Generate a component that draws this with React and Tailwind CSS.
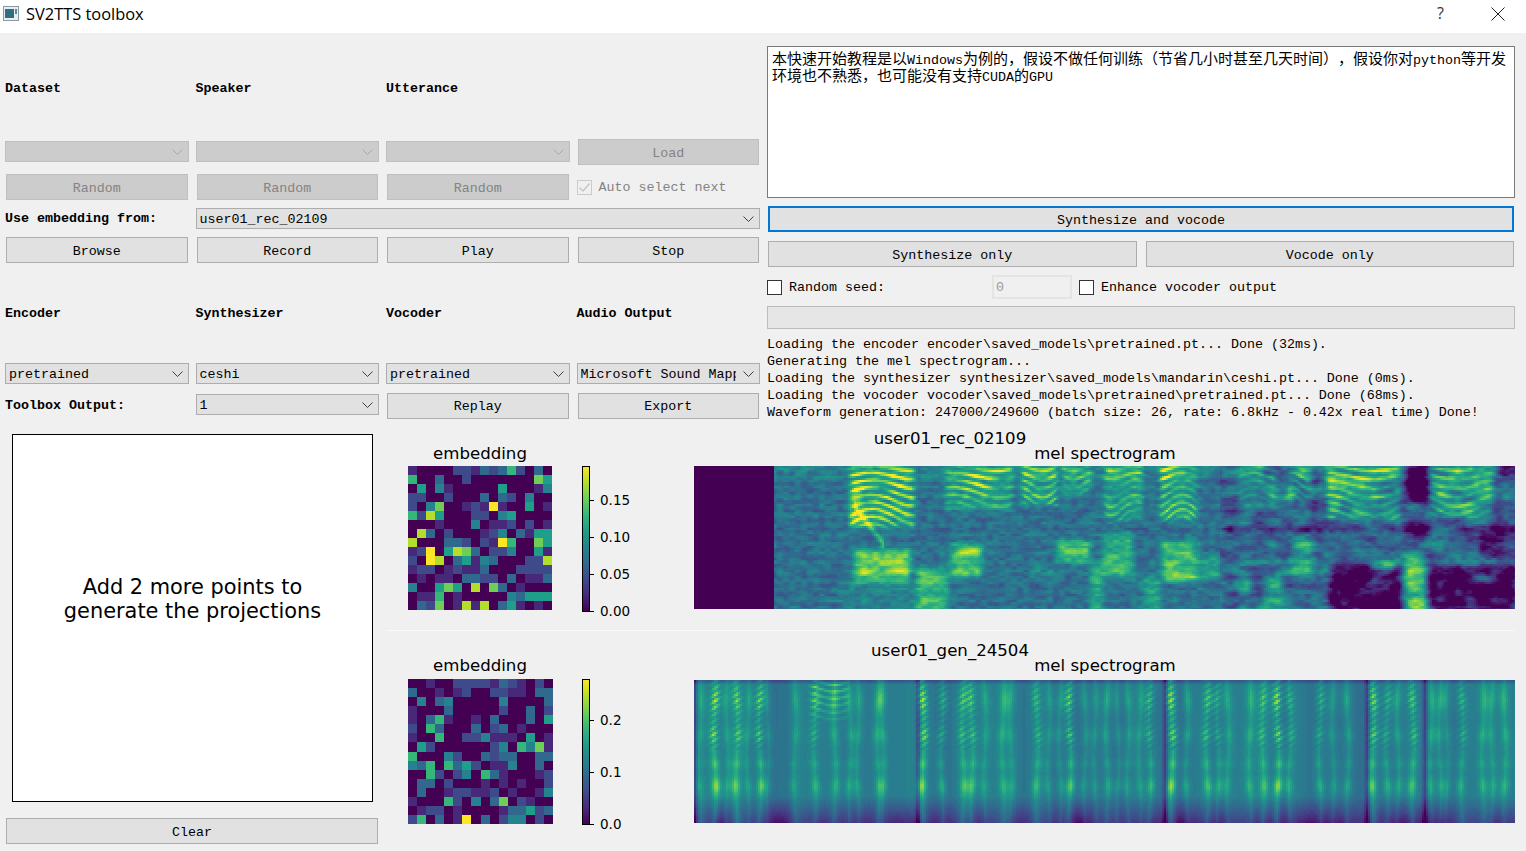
import React from 'react';

// ─── Viridis ─────────────────────────────────────────────────
const VIRIDIS = [
  [68, 1, 84], [72, 40, 120], [62, 74, 137], [49, 104, 142], [38, 130, 142],
  [31, 158, 137], [53, 183, 121], [110, 206, 88], [181, 222, 43], [253, 231, 37],
];

function viridis(t) {
  const v = Math.min(0.9999, Math.max(0, t)) * (VIRIDIS.length - 1);
  const i = Math.floor(v);
  const f = v - i;
  const a = VIRIDIS[i];
  const b = VIRIDIS[i + 1];
  return `rgb(${Math.round(a[0] + (b[0] - a[0]) * f)},${Math.round(a[1] + (b[1] - a[1]) * f)},${Math.round(a[2] + (b[2] - a[2]) * f)})`;
}

// ─── Noise helpers for the spectrograms ──────────────────────
const rnd = (x, y) => {
  const s = Math.sin(x * 127.1 + y * 311.7) * 43758.5453;
  return s - Math.floor(s);
};
const smooth = (t) => t * t * (3 - 2 * t);
const noise = (x, y) => {
  const xi = Math.floor(x);
  const yi = Math.floor(y);
  const u = smooth(x - xi);
  const v = smooth(y - yi);
  const a = rnd(xi, yi) * (1 - u) + rnd(xi + 1, yi) * u;
  const b = rnd(xi, yi + 1) * (1 - u) + rnd(xi + 1, yi + 1) * u;
  return a * (1 - v) + b * v;
};
const edge = (v, a, b, s) => {
  const l = Math.min(1, Math.max(0, (v - a) / s + 0.5));
  const r = Math.min(1, Math.max(0, (b - v) / s + 0.5));
  return smooth(l) * smooth(r);
};
const box = (x, y, b, s = 5) => edge(x, b[0], b[1], s) * edge(y, b[2], b[3], s);

// x0, x1, y0, y1, amplitude
const REC_VOICED = [
  [850, 915, 1, 62, 0.5], [945, 1013, 1, 44, 0.44], [1022, 1057, 1, 40, 0.44], [1062, 1092, 1, 30, 0.36],
  [1105, 1143, 1, 55, 0.34], [1160, 1197, 1, 55, 0.46], [1238, 1277, 1, 35, 0.24], [1287, 1313, 1, 35, 0.2],
  [1327, 1400, 1, 55, 0.42], [1430, 1493, 1, 50, 0.3],
];
const REC_BLOBS = [
  [853, 912, 82, 116, 0.32], [860, 910, 90, 96, 0.14], [856, 905, 102, 108, 0.18], [950, 982, 78, 112, 0.32],
  [958, 982, 84, 90, 0.2], [952, 982, 102, 108, 0.14], [1057, 1090, 74, 96, 0.34], [1030, 1057, 100, 115, 0.1],
  [917, 947, 102, 146, 0.3], [920, 945, 108, 118, 0.12], [1090, 1103, 98, 146, 0.26], [1103, 1133, 67, 113, 0.26],
  [1105, 1128, 100, 106, 0.14], [1162, 1197, 75, 115, 0.34], [1197, 1220, 90, 113, 0.18], [1165, 1220, 108, 113, 0.14],
  [1143, 1160, 110, 146, 0.2], [1238, 1250, 105, 146, 0.16], [1263, 1285, 108, 146, 0.18], [1290, 1313, 70, 115, 0.18],
  [1330, 1400, 100, 150, -0.42], [1310, 1330, 35, 50, -0.2], [1407, 1427, -5, 37, -0.4], [1405, 1430, 58, 75, -0.3],
  [1430, 1515, 100, 150, -0.38], [1480, 1520, 60, 90, -0.26], [1500, 1520, -5, 12, -0.4], [1265, 1280, -5, 20, -0.3],
  [1370, 1395, 97, 105, 0.5], [1370, 1395, 110, 115, 0.4], [1405, 1427, 88, 146, 0.32], [1473, 1500, 110, 116, 0.36],
  [1220, 1520, 58, 66, -0.16], [840, 917, 115, 146, 0.06],
  [850, 862, 20, 58, 0.22], [1327, 1380, 12, 20, 0.16],
];

function recValue(x, y) {
  if (x < 775) return 0;
  let v = 0.37 + 0.2 * (noise(x / 6, y / 3) - 0.5) + 0.05 * (noise(x / 2.7, y / 1.6) - 0.5);
  v += 0.025 * Math.sin(y / 1.5) + (y < 12 ? 0.06 : 0);
  if (x > 1220) v += 0.32 * (noise(x / 14 + 9, y / 8) - 0.58);
  REC_VOICED.forEach((s, i) => {
    const b = box(x, y, s, 9);
    if (b > 0) {
      // harmonics sag through the middle of each voiced run
      const t = (x - s[0]) / (s[1] - s[0]);
      const bend = 6 * Math.sin(t * Math.PI * 1.5 + i) * (0.4 + y / 60);
      const wave = 0.5 + 0.5 * Math.sin((2 * Math.PI * (y + bend)) / 8);
      const mod = 0.15 + 1.4 * noise(x / 20 + i * 5, y / 11);
      const fall = 1 - (0.55 * y) / s[3];
      v += s[4] * b * Math.pow(wave, 1.5) * mod * fall + 0.13 * b;
    }
  });
  for (const s of REC_BLOBS) v += s[4] * box(x, y, s, 12) * (0.72 + 0.5 * noise(x / 18, y / 7));
  // the falling formant in the first vowel
  const d = Math.abs(y - (38 + (x - 853) * 1.3));
  if (x > 853 && x < 885 && d < 7) v += 0.3 * (1 - d / 7);
  return v;
}

// centre x, amplitude
const GEN_STREAKS = [
  [700, 0.14], [715, 0.42], [727, 0.14], [737, 0.32], [748, 0.16], [760, 0.36], [768, 0.12], [795, 0.14],
  [815, 0.22], [835, 0.2], [850, 0.18], [858, 0.16], [878, 0.2], [883, 0.18],
  [923, 0.44], [942, 0.24], [963, 0.28], [972, 0.28], [985, 0.14], [1003, 0.2], [1011, 0.14], [1037, 0.24],
  [1049, 0.14], [1060, 0.16], [1070, 0.36], [1085, 0.14], [1095, 0.14], [1107, 0.2], [1118, 0.14], [1128, 0.16],
  [1140, 0.14], [1150, 0.26], [1172, 0.44], [1187, 0.2], [1207, 0.3], [1218, 0.22], [1228, 0.16], [1250, 0.2],
  [1263, 0.26], [1278, 0.46], [1290, 0.22], [1320, 0.22], [1333, 0.14], [1348, 0.18], [1373, 0.38], [1387, 0.22],
  [1398, 0.18], [1413, 0.3], [1431, 0.2], [1440, 0.18], [1447, 0.12], [1462, 0.22], [1483, 0.2], [1492, 0.16], [1505, 0.2],
];
const GEN_DARK = [694.5, 918, 1165, 1367, 1425];

function genProfile(y) {
  return (
    0.36 +
    0.6 * Math.exp(-(((y - 20) / 12) ** 2)) +
    0.48 * Math.exp(-(((y - 55) / 8) ** 2)) +
    0.32 * Math.exp(-(((y - 84) / 5) ** 2)) +
    0.6 * Math.exp(-(((y - 106) / 8) ** 2))
  );
}

function genValue(x, y) {
  let v = 0.4 + 0.1 * (noise(x / 16, 3) - 0.5);
  const p = genProfile(y);
  GEN_STREAKS.forEach((s, i) => {
    const dx = x - (s[0] + 1.2 * Math.sin(y / 18 + i * 1.7));
    if (Math.abs(dx) > 14) return;
    let a = s[1] * Math.exp(-((dx / 4.6) ** 2)) * p;
    if (y < 70 && s[1] > 0.2) a *= 0.8 + 0.4 * Math.sin((2 * Math.PI * (y + x * 0.6)) / 6.5);
    v += a + 0.04 * Math.exp(-((dx / 1.5) ** 2));
  });
  // flat harmonics of the long vowel in the middle of the first run
  const flat = box(x, y, [810, 848, 2, 42], 8);
  if (flat > 0) v += 0.26 * flat * Math.pow(0.5 + 0.5 * Math.sin((2 * Math.PI * (y + 3 * Math.sin(x / 9))) / 7), 1.5) * (1 - y / 60);
  // quiet bottom and top of the band
  if (y > 116) v -= ((y - 116) / 27) * (0.2 + 0.16 * noise(x / 20, 1));
  if (y < 5) v -= (0.2 * (5 - y)) / 5;
  for (const d of GEN_DARK) v -= 0.22 * Math.exp(-(((x - d) / 2.4) ** 2));
  return v;
}

// One path per colour level on whole pixels, runs of equal level merged, so the DOM stays small
function buildSpectrogram(fn, x0, y0, w, h) {
  const levels = 48;
  const parts = Array.from({ length: levels }, () => []);
  const cols = Math.ceil(w / 2);
  const rows = Math.ceil(h / 2);
  for (let r = 0; r < rows; r++) {
    const rh = Math.min(2, h - r * 2);
    let start = 0;
    let cur = -1;
    for (let c = 0; c <= cols; c++) {
      const lv = c === cols ? -2 : Math.round(Math.min(1, Math.max(0, fn(x0 + c * 2 + 1, r * 2 + 1))) * (levels - 1));
      if (lv !== cur) {
        if (cur >= 0) {
          const run = Math.min(c * 2, w) - start * 2;
          parts[cur].push(`M${x0 + start * 2} ${y0 + r * 2}h${run}v${rh}h-${run}z`);
        }
        start = c;
        cur = lv;
      }
    }
  }
  return parts.map((p, i) => ({ fill: viridis(i / (levels - 1)), d: p.join('') })).filter((p) => p.d);
}

const REC_SPEC = buildSpectrogram(recValue, 694, 466, 821, 143);
const GEN_SPEC = buildSpectrogram(genValue, 694, 680, 821, 143);

// ─── Embedding heatmaps, 0-9 ─────────────────────────────────
const EMBED_REC = [
  '1000022132362030', '6003002000000075', '0504100000500014', '2200200030320400',
  '2047001219100501', '6285000220450000', '0001000401120201', '0830200012403155',
  '8000332021960075', '1290587302240051', '2098035143000228', '1220121130002222',
  '0101103322030113', '4005750807301000', '0116010000043555', '0327018180351010',
];
const EMBED_GEN = [
  '0010022221321020', '3001012002211033', '0403400000400003', '1000300000200302',
  '1036100103000305', '2063000302301000', '1006002241110501', '0520000002406471',
  '6000420032330033', '4360635201140030', '0062024063100012', '0330200010101002',
  '0300122112010014', '1000620403702100', '0122010000133523', '2603019030244020',
];

function Heatmap({ data, x, y, cell }) {
  return data.flatMap((row, r) =>
    row.split('').map((c, i) => (
      <rect key={`${r}-${i}`} x={x + i * cell} y={y + r * cell} width={cell + 0.3} height={cell + 0.3} fill={viridis(Number(c) / 9)} />
    ))
  );
}

function Colorbar({ id, y0, y1, ticks }) {
  return (
    <g>
      <defs>
        <linearGradient id={id} x1="0" y1="1" x2="0" y2="0">
          {VIRIDIS.map((c, i) => (
            <stop key={i} offset={i / (VIRIDIS.length - 1)} stopColor={`rgb(${c.join(',')})`} />
          ))}
        </linearGradient>
      </defs>
      <rect x="582.5" y={y0 + 0.5} width="7" height={y1 - y0} fill={`url(#${id})`} stroke="#000" strokeWidth="1" />
      {ticks.map(([label, y]) => (
        <g key={label}>
          <line x1="590" x2="594" y1={y + 0.5} y2={y + 0.5} stroke="#000" />
          <text x="600" y={y + 5} className="fill-black font-['DejaVu_Sans'] text-[13.5px]">{label}</text>
        </g>
      ))}
    </g>
  );
}

function Figure() {
  const title = "fill-black font-['DejaVu_Sans'] text-[16.6px]";
  return (
    <svg viewBox="386 430 1129 421" className="h-[421px] w-[1129px] shrink-0 overflow-visible">
      <text x="950" y="444" textAnchor="middle" className={title}>user01_rec_02109</text>
      <text x="480" y="459" textAnchor="middle" className={title}>embedding</text>
      <text x="1105" y="459" textAnchor="middle" className={title}>mel spectrogram</text>
      <g shapeRendering="crispEdges">
        <Heatmap data={EMBED_REC} x={408} y={466} cell={9} />
        {REC_SPEC.map((p) => <path key={p.fill} d={p.d} fill={p.fill} />)}
      </g>
      <Colorbar id="cb-rec" y0={466} y1={611} ticks={[['0.15', 500], ['0.10', 537], ['0.05', 574], ['0.00', 611]]} />

      <line x1="386" x2="1515" y1="630.5" y2="630.5" stroke="#fafafa" />

      <text x="950" y="656" textAnchor="middle" className={title}>user01_gen_24504</text>
      <text x="480" y="671" textAnchor="middle" className={title}>embedding</text>
      <text x="1105" y="671" textAnchor="middle" className={title}>mel spectrogram</text>
      <g shapeRendering="crispEdges">
        <Heatmap data={EMBED_GEN} x={408} y={679} cell={9.07} />
        {GEN_SPEC.map((p) => <path key={p.fill} d={p.d} fill={p.fill} />)}
      </g>
      <Colorbar id="cb-gen" y0={679} y1={824} ticks={[['0.2', 720], ['0.1', 772], ['0.0', 824]]} />
    </svg>
  );
}

// ─── Qt-ish widgets ──────────────────────────────────────────
function Chevron({ disabled }) {
  return (
    <svg width="11" height="6" viewBox="0 0 11 6" className="shrink-0" fill="none">
      <path d="M0.5 0.5 L5.5 5.5 L10.5 0.5" stroke={disabled ? '#a6a6a6' : '#404040'} strokeWidth="1" />
    </svg>
  );
}

function Combo({ value = '', disabled, className = '' }) {
  return (
    <div className={`flex h-[21px] items-center justify-between border pl-[3px] pr-[5px] ${disabled ? 'border-[#bfbfbf] bg-[#cccccc]' : 'border-[#adadad] bg-[#e1e1e1]'} ${className}`}>
      <span className="mr-[7px] min-w-0 flex-1 overflow-hidden whitespace-nowrap pt-[2px] text-black">{value}</span>
      <Chevron disabled={disabled} />
    </div>
  );
}

function Btn({ children, disabled, focus, className = '' }) {
  let tone = 'border border-[#adadad] bg-[#e1e1e1] text-black';
  if (disabled) tone = 'border border-[#bfbfbf] bg-[#cccccc] text-[#838383]';
  if (focus) tone = 'border-2 border-[#0078d7] bg-[#e1e1e1] text-black';
  return <div className={`mx-px flex h-[26px] items-center justify-center pt-[2px] ${tone} ${className}`}>{children}</div>;
}

const Label = ({ children }) => <div className="flex items-center whitespace-nowrap font-bold text-black">{children}</div>;

function Check({ label, checked, disabled }) {
  return (
    <div className="flex items-center gap-[7px]">
      <div className={`flex h-[15px] w-[15px] items-center justify-center border ${disabled ? 'border-[#cccccc]' : 'border-[#333333] bg-white'}`}>
        {checked && (
          <svg width="11" height="9" viewBox="0 0 11 9" fill="none">
            <path d="M0.5 4.5 L4 8 L10.5 0.5" stroke="#c4c4c4" strokeWidth="1.2" />
          </svg>
        )}
      </div>
      <span className={`whitespace-nowrap ${disabled ? 'text-[#838383]' : 'text-black'}`}>{label}</span>
    </div>
  );
}

function Zh({ children }) {
  return <span className="font-['Noto_Sans_CJK_SC'] text-[15px] leading-[10px] [text-spacing-trim:space-all]">{children}</span>;
}

function TitleBar() {
  return (
    <div className="flex h-[33px] shrink-0 items-center justify-between bg-white pb-[6px] pl-[3px] pr-[21px]">
      <div className="flex items-center gap-[7px]">
        <svg width="16" height="15" viewBox="0 0 16 15">
          <rect x="0.5" y="0.5" width="15" height="14" fill="#e8eef0" stroke="#8a9aa0" />
          <rect x="2" y="3" width="9" height="9" fill="#2f6f7f" />
          <rect x="12" y="3" width="2" height="5" fill="#4f8f9f" />
        </svg>
        <span className="font-['Open_Sans'] text-[16.4px] text-black">SV2TTS toolbox</span>
      </div>
      <div className="flex items-center gap-[47px]">
        <span className="font-['Open_Sans'] text-[16px] text-[#333333]">?</span>
        <svg width="14" height="14" viewBox="0 0 14 14" fill="none">
          <path d="M0.5 0.5 L13.5 13.5 M13.5 0.5 L0.5 13.5" stroke="#222222" strokeWidth="1" />
        </svg>
      </div>
    </div>
  );
}

const LOG = [
  'Loading the encoder encoder\\saved_models\\pretrained.pt... Done (32ms).',
  'Generating the mel spectrogram...',
  'Loading the synthesizer synthesizer\\saved_models\\mandarin\\ceshi.pt... Done (0ms).',
  'Loading the vocoder vocoder\\saved_models\\pretrained\\pretrained.pt... Done (68ms).',
  'Waveform generation: 247000/249600 (batch size: 26, rate: 6.8kHz - 0.42x real time) Done!',
];

export default function App() {
  return (
    <div className="flex h-[851px] w-[1526px] flex-col overflow-hidden bg-[#f0f0f0] font-['Liberation_Mono','Noto_Sans_CJK_SC',monospace] text-[13.33px] leading-[17px]">
      <TitleBar />

      {/* Controls */}
      <div className="flex h-[397px] shrink-0 gap-[7px] pl-[5px] pt-[12px]">
        <div className="grid h-fit w-[755px] shrink-0 grid-cols-4 grid-rows-[86px_27px_26px_21px_26px_84px_22px_25px] gap-x-[7px] gap-y-[8px]">
          <Label>Dataset</Label>
          <Label>Speaker</Label>
          <Label>Utterance</Label>
          <div />

          <Combo disabled className="mt-[2px]" />
          <Combo disabled className="mt-[2px]" />
          <Combo disabled className="mt-[2px]" />
          <Btn disabled>Load</Btn>

          <Btn disabled>Random</Btn>
          <Btn disabled>Random</Btn>
          <Btn disabled>Random</Btn>
          <Check label="Auto select next" checked disabled />

          <Label>Use embedding from:</Label>
          <Combo value="user01_rec_02109" className="col-span-3" />

          <Btn>Browse</Btn>
          <Btn>Record</Btn>
          <Btn>Play</Btn>
          <Btn>Stop</Btn>

          <Label>Encoder</Label>
          <Label>Synthesizer</Label>
          <Label>Vocoder</Label>
          <Label>Audio Output</Label>

          <Combo value="pretrained" />
          <Combo value="ceshi" />
          <Combo value="pretrained" />
          <Combo value="Microsoft Sound Mapper" />

          <Label>Toolbox Output:</Label>
          <Combo value="1" className="mt-px" />
          <Btn className="h-[25px] pt-px!">Replay</Btn>
          <Btn className="h-[25px] pt-px!">Export</Btn>
        </div>

        <div className="flex w-[748px] shrink-0 flex-col">
          <div className="mt-px h-[152px] border border-[#7a7a7a] bg-white pl-[4px] pr-[4px] pt-[5px] text-black">
            <Zh>本快速开始教程是以</Zh>Windows<Zh>为例的，假设不做任何训练（节省几小时甚至几天时间），假设你对</Zh>python<Zh>等开发环境也不熟悉，也可能没有支持</Zh>CUDA<Zh>的</Zh>GPU
          </div>
          <Btn focus className="mt-[8px]">Synthesize and vocode</Btn>
          <div className="mt-[9px] grid grid-cols-2 gap-x-[7px]">
            <Btn>Synthesize only</Btn>
            <Btn>Vocode only</Btn>
          </div>
          <div className="mt-[8px] flex h-[24px] items-center">
            <div className="w-[225px]">
              <Check label="Random seed:" />
            </div>
            <div className="flex h-[24px] w-[80px] items-center border-2 border-[#e4e4e4] bg-[#f0f0f0] pl-[2px] text-[#9a9a9a]">0</div>
            <div className="ml-[7px]">
              <Check label="Enhance vocoder output" />
            </div>
          </div>
          <div className="mt-[7px] h-[23px] border border-[#bcbcbc] bg-[#e6e6e6]" />
          <div className="mt-[7px] whitespace-pre text-black">
            {LOG.map((line) => <div key={line}>{line}</div>)}
          </div>
        </div>
      </div>

      {/* Projections and plots */}
      <div className="flex min-h-0 flex-1">
        <div className="flex w-[386px] shrink-0 flex-col pl-[5px] pt-[4px]">
          <div className="ml-[7px] flex h-[368px] w-[361px] items-center justify-center border border-black bg-white pb-[39px] text-center font-['DejaVu_Sans'] text-[20.9px] leading-[24px] text-black">
            <div>Add 2 more points to<br />generate the projections</div>
          </div>
          <div className="mt-[16px] w-[374px]">
            <Btn className="h-[25px]">Clear</Btn>
          </div>
        </div>
        <Figure />
      </div>
    </div>
  );
}
